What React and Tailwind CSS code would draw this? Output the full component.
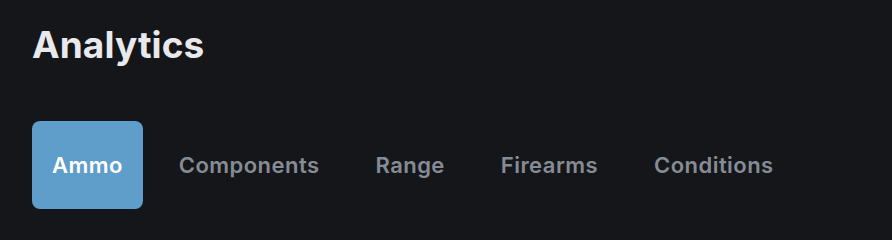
const tabs = ['Ammo', 'Components', 'Range', 'Firearms', 'Conditions'];

export default function App() {
  const active = 'Ammo';

  return (
    <div className="min-h-[240px] w-full bg-[#151619] px-8 pt-[21px]" style={{ fontFamily: 'Inter, "Noto Sans", sans-serif' }}>
      <h1 className="text-[37px] font-bold leading-[48px] tracking-[0.1px] text-[#e8e9ec]">Analytics</h1>

      <div className="mt-[52px] flex items-center gap-4">
        {tabs.map((tab) => (
          <button
            key={tab}
            className={
              tab === active
                ? 'h-[88px] rounded-lg bg-[#5f9dca] px-5 text-[22px] font-semibold tracking-[0.45px] text-white'
                : 'h-[88px] rounded-lg px-5 text-[22px] font-semibold tracking-[0.45px] text-[#868c96]'
            }
          >
            {tab}
          </button>
        ))}
      </div>
    </div>
  );
}
